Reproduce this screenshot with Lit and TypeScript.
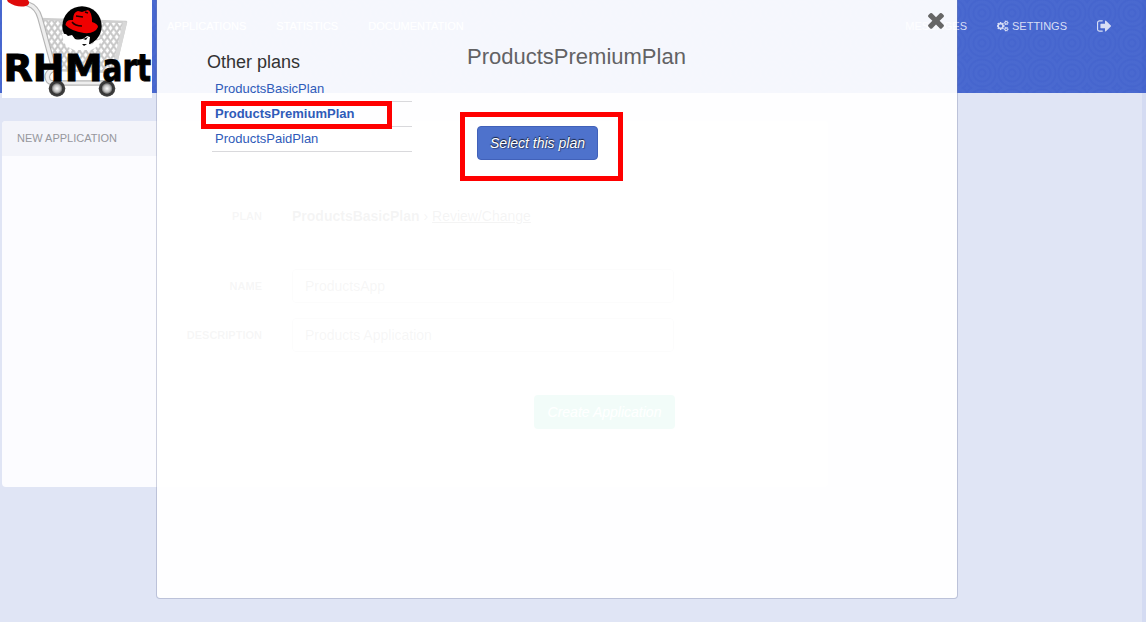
import { LitElement, html, css, svg } from "lit";
import { customElement } from "lit/decorators.js";

const TIMES = "M1490 1322q0 40-28 68l-136 136q-28 28-68 28t-68-28l-294-294-294 294q-28 28-68 28t-68-28l-136-136q-28-28-28-68t28-68l294-294-294-294q-28-28-28-68t28-68l136-136q28-28 68-28t68 28l294 294 294-294q28-28 68-28t68 28l136 136q28 28 28 68t-28 68l-294 294 294 294q28 28 28 68z";
const SIGN_OUT = "M704 1440q0 4 1 20t.5 26.5-3 23.5-10 19.5-20.5 6.5h-320q-119 0-203.5-84.5t-84.5-203.5v-704q0-119 84.5-203.5t203.5-84.5h320q13 0 22.5 9.5t9.5 22.5q0 4 1 20t.5 26.5-3 23.5-10 19.5-20.5 6.5h-320q-66 0-113 47t-47 113v704q0 66 47 113t113 47h312l11.5 1 11.5 3 8 5.5 7 9 2 13.5zm928-544q0 26-19 45l-544 544q-19 19-45 19t-45-19-19-45v-288h-448q-26 0-45-19t-19-45v-384q0-26 19-45t45-19h448v-288q0-26 19-45t45-19 45 19l544 544q19 19 19 45z";
const SMALL_COG = "v140q0 16-149 31-12 27-30 52 51 113 51 138 0 4-4 7-122 71-124 71-8 0-46-47t-52-68q-20 2-30 2t-30-2q-14 21-52 68t-46 47q-2 0-124-71-4-3-4-7 0-25 51-138-18-25-30-52-149-15-149-31v-140q0-16 149-31 13-29 30-52-51-113-51-138 0-4 4-7 4-2 35-20t59-34 30-16q8 0 46 46.5t52 67.5q20-2 30-2t30 2q51-71 92-112l6-2q4 0 124 70 4 3 4 7 0 25-51 138 17 23 30 52 149 15 149 31z";
const COGS = "M832 896q0-106-75-181t-181-75-181 75-75 181 75 181 181 75 181-75 75-181zm768 512q0-52-38-90t-90-38-90 38-38 90q0 53 37.5 90.5t90.5 37.5 90.5-37.5 37.5-90.5zm0-1024q0-52-38-90t-90-38-90 38-38 90q0 53 37.5 90.5t90.5 37.5 90.5-37.5 37.5-90.5zm-384 421v185q0 10-7 19.5t-16 10.5l-155 24q-11 35-32 76 34 48 90 115 7 11 7 20 0 12-7 19-23 30-82.5 89.5t-78.5 59.5q-11 0-21-7l-115-90q-37 19-77 31-11 108-23 155-7 24-30 24h-186q-11 0-20-7.5t-10-17.5l-23-153q-34-10-75-31l-118 89q-7 7-20 7-11 0-21-8-144-133-144-160 0-9 7-19 10-14 41-53t47-61q-23-44-35-82l-152-24q-10-1-17-9.5t-7-19.5v-185q0-10 7-19.5t16-10.5l155-24q11-35 32-76-34-48-90-115-7-11-7-20 0-12 7-20 22-30 82-89t79-59q11 0 21 7l115 90q34-18 77-32 11-108 23-154 7-24 30-24h186q11 0 20 7.5t10 17.5l23 153q34 10 75 31l118-89q8-7 20-7 11 0 21 8 144 133 144 160 0 8-7 19-12 16-42 54t-45 60q23 48 34 82l152 23q10 2 17 10.5t7 19.5zm640 533" + SMALL_COG + "m0-1024" + SMALL_COG;

@customElement("mart-logo")
class MartLogo extends LitElement {
  static styles = css`
    :host { display: block; width: 150px; height: 98px; background: #fff; }
    svg { display: block; overflow: visible; }
    .word { font: bold 37px "DejaVu Sans", sans-serif; fill: #000; stroke: #000; stroke-width: 0.9px; }
  `;
  render() {
    return html`<svg width="150" height="98" viewBox="2 0 150 98">
      <defs>
        <pattern id="mesh" width="6.2" height="9" patternUnits="userSpaceOnUse" patternTransform="translate(2 1)">
          <rect width="6.2" height="9" fill="#fff"></rect>
          <path d="M0 0L6.2 9M6.2 0L0 9" stroke="#c8c8c8" stroke-width="2"></path>
        </pattern>
        <radialGradient id="hub">
          <stop offset="0" stop-color="#fff"></stop>
          <stop offset=".42" stop-color="#bbb"></stop>
          <stop offset=".58" stop-color="#777"></stop>
          <stop offset=".68" stop-color="#333"></stop>
          <stop offset="1" stop-color="#444"></stop>
        </radialGradient>
      </defs>
      <path d="M40 19L126 22L114 72L53 70Z" fill="url(#mesh)" stroke="#cfcfcf" stroke-width="2.5" stroke-linejoin="round"></path>
      <path d="M125 22L113 73" stroke="#d8d8d8" stroke-width="4"></path>
      <path d="M28 4Q37 7 40 18L54 69Q45 73 48 80Q49 83 56 83H108" fill="none" stroke="#b5b5b5" stroke-width="5.5" stroke-linecap="round"></path>
      <path d="M28 4Q37 7 40 18L54 69Q45 73 48 80Q49 83 56 83H108" fill="none" stroke="#eee" stroke-width="3.2"></path>
      <path d="M7 0H28Q31 4 26 6Q17 8 8 2Z" fill="#df0a0a"></path>
      <circle cx="82" cy="26" r="19.7" fill="#000"></circle>
      <path d="M62 34Q66 33 68 36L72 35L75 39Q82 41 87 36L90 37L89 44L92 45L95 41L102 39Q99 47 91 50H74L66 46Q63 41 62 34Z" fill="#fff"></path>
      <path d="M73 36L79 38L78 39ZM83 39L88 37L86 40ZM82 44L87 44L84 46Z" fill="#111"></path>
      <path d="M65.5 25Q66 20 71 20L73 20Q73 12 78 11L82 12L88 10Q92 12 92 22Q98 24 98 27Q95 34 84 33Q71 31 65.5 25Z" fill="#f00000"></path>
      <path d="M72 22Q75 26 82 26M76 16L83 17M85 12L88 13" fill="none" stroke="#210000" stroke-width="1.5"></path>
      ${[57, 107].map((x) => svg`<circle cx=${x} cy="88.5" r="8.3" fill="url(#hub)"></circle>`)}
      <text class="word" x="3.5" y="80.5"><tspan textLength="99" lengthAdjust="spacingAndGlyphs">RHM</tspan><tspan textLength="48.5" lengthAdjust="spacingAndGlyphs">art</tspan></text>
    </svg>`;
  }
}

@customElement("app-root")
class AppRoot extends LitElement {
  static styles = css`
    :host {
      display: block; position: relative; width: 1146px; height: 622px; overflow: hidden;
      background: #e0e5f5; font-family: "Liberation Sans", Arial, sans-serif; font-size: 14px;
      box-sizing: border-box;
    }
    *, *::before, *::after { box-sizing: border-box; }
    .edge { position: absolute; top: 0; right: 0; width: 4px; height: 622px; background: rgba(37, 73, 200, 0.06); }
    header {
      display: flex; justify-content: space-between; height: 93px; padding: 19px 35px 0 167px;
      color: #d8def5; font-size: 11px; line-height: 14px;
      background-color: #4a6ad0;
      background-image: repeating-radial-gradient(circle at center, rgba(35, 65, 190, 0.02) 0, rgba(35, 65, 190, 0.02) 2px, rgba(35, 65, 190, 0.11) 3px, rgba(35, 65, 190, 0.11) 4px, rgba(35, 65, 190, 0.02) 5px);
      background-size: 30px 30px; background-position: 7px -2px;
    }
    nav { display: flex; gap: 30px; }
    nav:first-child { color: #fff; }
    nav span { display: flex; align-items: center; gap: 3px; height: 14px; }
    nav svg { display: block; fill: currentColor; }
    mart-logo { position: absolute; left: 2px; top: 0; }
    .panel { width: 826px; height: 366px; margin: 28px 0 0 2px; border-radius: 4px; background: #fcfcff; overflow: hidden; }
    .panel h2 { margin: 0; height: 35px; padding-left: 15px; background: #f3f4fa; color: #96979d; font: 11px/35px "Liberation Sans", sans-serif; }
    form { display: grid; grid-template-columns: 260px 382px; column-gap: 30px; grid-template-rows: 34px 36px 34px 15px 34px 43px 34px; padding-top: 43px; color: #333; line-height: 34px; }
    .label { font-size: 11px; font-weight: bold; text-align: right; color: #555; }
    .gap { grid-column: 1 / -1; }
    .field { height: 34px; border: 1px solid #c0c0c0; border-radius: 4px; padding-left: 12px; line-height: 32px; color: #555; }
    .create { grid-column: 2; justify-self: end; width: 141px; height: 34px; margin-right: -1px; border-radius: 4px; background: #00c880; color: #fff; text-align: center; font-style: italic; }
    .modal {
      position: absolute; left: 156px; top: 0; width: 802px; height: 599px;
      border: 1px solid rgba(120, 130, 165, 0.35); border-top: 0; border-radius: 0 0 4px 4px;
      background: rgba(255, 255, 255, 0.95); background-clip: padding-box;
      display: grid; grid-template-columns: 205px auto; column-gap: 55px; align-content: start; padding: 0 0 0 50px;
    }
    .plans h3 { margin: 0; padding-top: 50px; font-size: 18px; line-height: 24px; font-weight: normal; color: #333; }
    ul { list-style: none; margin: 3px 0 0 5px; padding: 0; width: 200px; }
    li { height: 25px; padding-left: 3px; border-bottom: 1px solid #d9d9dc; font-size: 13px; line-height: 23px; color: #2f5bb9; }
    .current { font-weight: bold; }
    .detail h1 { margin: 0; padding-top: 43px; font-size: 22px; line-height: 28px; font-weight: normal; color: #626264; }
    .select { margin: 55px 0 0 10px; width: 121px; height: 34px; border: 1px solid #4161b9; border-radius: 4px; background: #4e72cc; color: #fff; font-style: italic; line-height: 32px; text-align: center; text-shadow: 0 -1px 1px rgba(0, 0, 0, 0.75), 1px 1px 1px rgba(0, 0, 0, 0.35); }
    .close { position: absolute; right: 9px; top: 8px; width: 24px; height: 24px; fill: #666; }
    .mark { position: absolute; border: 5px solid #f00; }
    .mark-plan { left: 201px; top: 101px; width: 191px; height: 28px; }
    .mark-button { left: 460px; top: 112px; width: 163px; height: 69px; }
  `;
  render() {
    return html`
      <header>
        <nav><span>APPLICATIONS</span><span>STATISTICS</span><span>DOCUMENTATION</span></nav>
        <nav>
          <span>MESSAGES</span>
          <span><svg width="12" height="12" viewBox="0 0 1920 1792"><path d=${COGS}></path></svg>SETTINGS</span>
          <span><svg width="14" height="16" viewBox="64 0 1568 1792"><path d=${SIGN_OUT}></path></svg></span>
        </nav>
      </header>
      <mart-logo></mart-logo>
      <section class="panel">
        <h2>NEW APPLICATION</h2>
        <form>
          <div class="label">PLAN</div><div><b>ProductsBasicPlan</b> › <u>Review/Change</u></div>
          <div class="gap"></div>
          <div class="label">NAME</div><div class="field">ProductsApp</div>
          <div class="gap"></div>
          <div class="label">DESCRIPTION</div><div class="field">Products Application</div>
          <div class="gap"></div>
          <div class="create">Create Application</div>
        </form>
      </section>
      <div class="edge"></div>
      <section class="modal">
        <div class="plans">
          <h3>Other plans</h3>
          <ul><li>ProductsBasicPlan</li><li class="current">ProductsPremiumPlan</li><li>ProductsPaidPlan</li></ul>
        </div>
        <div class="detail"><h1>ProductsPremiumPlan</h1><div class="select">Select this plan</div></div>
        <svg class="close" viewBox="0 0 1792 1792"><path d=${TIMES}></path></svg>
      </section>
      <div class="mark mark-plan"></div>
      <div class="mark mark-button"></div>
    `;
  }
}
